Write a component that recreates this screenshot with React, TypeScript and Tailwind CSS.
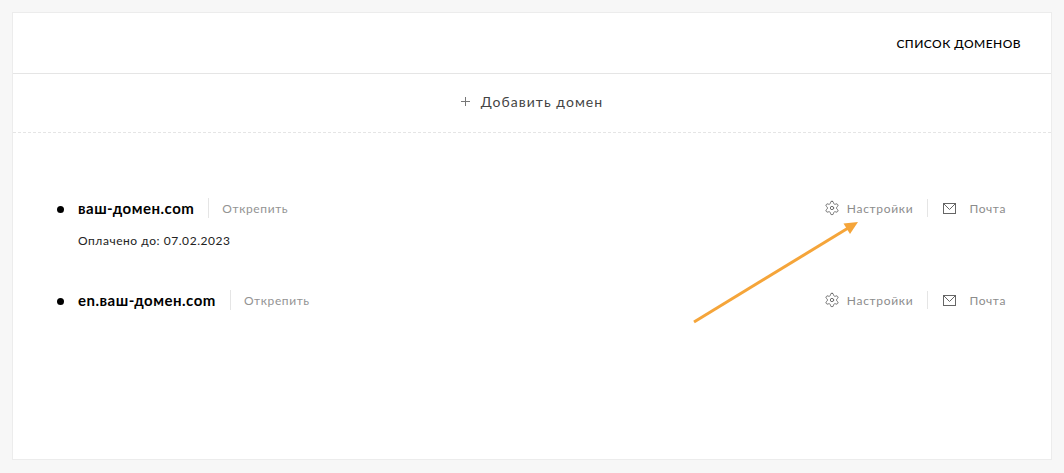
import React from "react";

const font = { fontFamily: '"Lato","Noto Sans",sans-serif' };

function Gear() {
  return (
    <svg width="16" height="16" viewBox="0 0 24 24" fill="none" stroke="#666" strokeWidth="1.4" strokeLinecap="round" strokeLinejoin="round" className="translate-x-px">
      <path d="M12.22 2h-.44a2 2 0 0 0-2 2v.18a2 2 0 0 1-1 1.73l-.43.25a2 2 0 0 1-2 0l-.15-.08a2 2 0 0 0-2.73.73l-.22.38a2 2 0 0 0 .73 2.73l.15.1a2 2 0 0 1 1 1.72v.51a2 2 0 0 1-1 1.74l-.15.09a2 2 0 0 0-.73 2.73l.22.38a2 2 0 0 0 2.73.73l.15-.08a2 2 0 0 1 2 0l.43.25a2 2 0 0 1 1 1.73V20a2 2 0 0 0 2 2h.44a2 2 0 0 0 2-2v-.18a2 2 0 0 1 1-1.73l.43-.25a2 2 0 0 1 2 0l.15.08a2 2 0 0 0 2.73-.73l.22-.39a2 2 0 0 0-.73-2.73l-.15-.08a2 2 0 0 1-1-1.74v-.5a2 2 0 0 1 1-1.74l.15-.09a2 2 0 0 0 .73-2.73l-.22-.38a2 2 0 0 0-2.73-.73l-.15.08a2 2 0 0 1-2 0l-.43-.25a2 2 0 0 1-1-1.73V4a2 2 0 0 0-2-2z" />
      <circle cx="12" cy="12" r="2.5" />
    </svg>
  );
}

function Mail() {
  return (
    <svg width="13" height="11" viewBox="0 0 13 11" fill="none" stroke="#666" strokeWidth="1">
      <rect x="0.5" y="0.5" width="12" height="10" />
      <path d="M0.5 0.5 6.5 6.5 12.5 0.5" />
    </svg>
  );
}

function Row({ name, paid }: { name: string; paid?: string }) {
  return (
    <li className="flex flex-col">
      <div className="flex items-center h-[20px]">
        <span className="w-[7px] h-[7px] rounded-full bg-black ml-[44px] mr-[14px] translate-y-px" />
        <span className="text-[15px] font-bold text-black tracking-[0.5px]">{name}</span>
        <span className="w-px h-[20px] bg-[#e5e5e5] ml-[14px] mr-[13px]" />
        <span className="text-[12px] text-[#939393] tracking-[0.6px] translate-y-px">Открепить</span>
        <div className="ml-auto flex items-center mr-[45px]">
          <Gear />
          <span className="text-[12px] text-[#8c8c8c] tracking-[0.7px] ml-[8px] translate-y-px">Настройки</span>
          <span className="w-px h-[18px] bg-[#e5e5e5] ml-[14px] mr-[15px]" />
          <Mail />
          <span className="text-[12px] text-[#8c8c8c] tracking-[0.6px] ml-[13px] translate-y-px">Почта</span>
        </div>
      </div>
      {paid && <div className="text-[12px] text-[#222] tracking-[0.55px] ml-[65px] mt-[14px] leading-[18px]">{paid}</div>}
    </li>
  );
}

export default function App() {
  return (
    <div className="relative w-[1064px] h-[473px] bg-[#f7f7f7] p-[12px] overflow-hidden" style={font}>
      <div className="h-[448px] bg-white border border-[#ececec] flex flex-col">
        <header className="h-[61px] border-b border-[#e5e5e5] flex items-center justify-end pr-[30px] shrink-0">
          <span className="text-[12px] font-medium text-black tracking-[0.45px] translate-y-px">СПИСОК ДОМЕНОВ</span>
        </header>
        <div className="h-[59px] border-b border-dashed border-[#e5e5e5] flex items-center justify-center shrink-0 pb-[3px]">
          <svg width="9" height="9" viewBox="0 0 9 9" stroke="#777" strokeWidth="1" className="mr-[11px]">
            <path d="M4.5 0V9M0 4.5H9" />
          </svg>
          <span className="text-[14px] text-[#444] tracking-[1.05px]">Добавить домен</span>
        </div>
        <ul className="flex flex-col gap-[40px] pt-[65px]">
          <Row name="ваш-домен.com" paid="Оплачено до: 07.02.2023" />
          <Row name="en.ваш-домен.com" />
        </ul>
      </div>
      <svg className="absolute left-[690px] top-[218px] pointer-events-none" width="172" height="108" viewBox="690 218 172 108" fill="none">
        <path d="M694 322 L849 227.5" stroke="#f5a53a" strokeWidth="3" />
        <path d="M858 222 L843.5 223.5 L850 234 Z" fill="#f5a53a" />
      </svg>
    </div>
  );
}
